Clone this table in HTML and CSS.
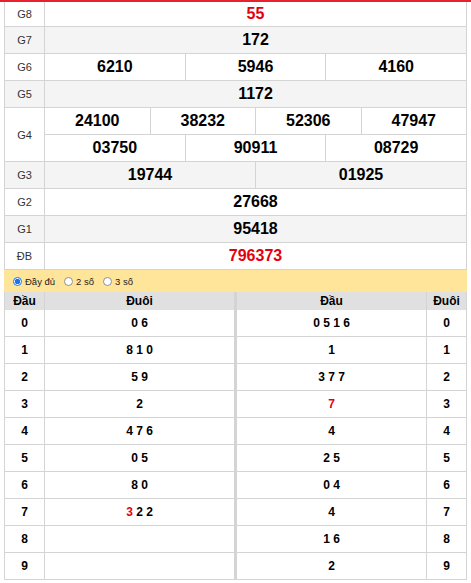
FILE: index.html
```html
<!DOCTYPE html>
<html lang="vi">
<head>
<meta charset="utf-8">
<title>Kết quả xổ số</title>
<link rel="stylesheet" href="styles.css">
</head>
<body>
<div class="topbar"></div>
<div class="page">
  <div class="results">
    <div class="row first"><div class="lbl">G8</div><div class="cells"><div class="cell red">55</div></div></div>
    <div class="row alt"><div class="lbl">G7</div><div class="cells"><div class="cell">172</div></div></div>
    <div class="row"><div class="lbl">G6</div><div class="cells"><div class="cell">6210</div><div class="cell">5946</div><div class="cell">4160</div></div></div>
    <div class="row alt"><div class="lbl">G5</div><div class="cells"><div class="cell">1172</div></div></div>
    <div class="row double"><div class="lbl">G4</div>
      <div class="stack">
        <div class="cells sub"><div class="cell">24100</div><div class="cell">38232</div><div class="cell">52306</div><div class="cell">47947</div></div>
        <div class="cells"><div class="cell">03750</div><div class="cell">90911</div><div class="cell">08729</div></div>
      </div>
    </div>
    <div class="row alt"><div class="lbl">G3</div><div class="cells"><div class="cell">19744</div><div class="cell">01925</div></div></div>
    <div class="row"><div class="lbl">G2</div><div class="cells"><div class="cell">27668</div></div></div>
    <div class="row alt"><div class="lbl">G1</div><div class="cells"><div class="cell">95418</div></div></div>
    <div class="row"><div class="lbl">ĐB</div><div class="cells"><div class="cell red">796373</div></div></div>
  </div>

  <div class="filter">
    <label class="opt"><input type="radio" name="mode" checked><span>Đầy đủ</span></label>
    <label class="opt"><input type="radio" name="mode"><span>2 số</span></label>
    <label class="opt"><input type="radio" name="mode"><span>3 số</span></label>
  </div>

  <div class="loto">
    <div class="h c1">Đầu</div><div class="h c2">Đuôi</div><div class="h c3">Đầu</div><div class="h c4">Đuôi</div>

    <div class="d c1">0</div><div class="d c2">0 6</div><div class="d c3">0 5 1 6</div><div class="d c4">0</div>
    <div class="d c1">1</div><div class="d c2">8 1 0</div><div class="d c3">1</div><div class="d c4">1</div>
    <div class="d c1">2</div><div class="d c2">5 9</div><div class="d c3">3 7 7</div><div class="d c4">2</div>
    <div class="d c1">3</div><div class="d c2">2</div><div class="d c3"><span class="red">7</span></div><div class="d c4">3</div>
    <div class="d c1">4</div><div class="d c2">4 7 6</div><div class="d c3">4</div><div class="d c4">4</div>
    <div class="d c1">5</div><div class="d c2">0 5</div><div class="d c3">2 5</div><div class="d c4">5</div>
    <div class="d c1">6</div><div class="d c2">8 0</div><div class="d c3">0 4</div><div class="d c4">6</div>
    <div class="d c1">7</div><div class="d c2"><span class="red">3</span> 2 2</div><div class="d c3">4</div><div class="d c4">7</div>
    <div class="d c1">8</div><div class="d c2"></div><div class="d c3">1 6</div><div class="d c4">8</div>
    <div class="d c1">9</div><div class="d c2"></div><div class="d c3">2</div><div class="d c4">9</div>
  </div>
</div>
</body>
</html>
```
FILE: styles.css
```css
* { box-sizing: border-box; }
html, body { margin: 0; padding: 0; background: #fff; }
body { font-family: "Liberation Sans", Arial, sans-serif; color: #000; }

.topbar { height: 2px; background: #e8212e; }
.page { padding: 0 4px; }

.results {
  border-left: 1px solid #d4d4d4;
  border-right: 1px solid #d4d4d4;
}
.row {
  display: flex;
  height: 27px;
  border-bottom: 1px solid #d4d4d4;
  background: #fff;
}
.row.first { height: 25px; }
.row.alt { background: #f4f4f4; }
.row.double { height: 54px; border-bottom: none; }
.lbl {
  width: 40px;
  flex: none;
  border-right: 1px solid #d4d4d4;
  display: flex;
  align-items: center;
  justify-content: center;
  font-size: 11px;
  color: #333;
}
.row.double .lbl { border-bottom: 1px solid #d4d4d4; }
.stack { flex: 1; display: flex; flex-direction: column; }
.stack .cells { height: 27px; flex: none; border-bottom: 1px solid #d4d4d4; }
.cells { flex: 1; display: flex; }
.cell {
  flex: 1 1 0;
  min-width: 0;
  display: flex;
  align-items: center;
  justify-content: center;
  font-size: 16px;
  font-weight: bold;
}
.cell + .cell { border-left: 1px solid #d4d4d4; }
.red { color: #e3000f; }

.filter {
  height: 22px;
  background: #ffe599;
  display: flex;
  align-items: center;
  padding-left: 9px;
  font-size: 9.5px;
  color: #222;
}
.opt { display: flex; align-items: center; margin-right: 9px; }
.opt input {
  -webkit-appearance: none;
  appearance: none;
  width: 9px;
  height: 9px;
  margin: 0 3px 0 0;
  border: 1px solid #8f8f8f;
  border-radius: 50%;
  background: #fff;
}
.opt input:checked {
  border: 1px solid #1a73e8;
  background: radial-gradient(circle, #1a73e8 0 2.5px, #fff 3px);
}

.loto {
  display: grid;
  grid-template-columns: 40px 192px 190px 40px;
  border-left: 1px solid #d4d4d4;
}
.loto > div {
  display: flex;
  align-items: center;
  justify-content: center;
  font-weight: bold;
  border-right: 1px solid #d4d4d4;
}
.loto > .c2 { border-right-width: 3px; }
.h {
  height: 18px;
  background: #e0e0e0;
  font-size: 12px;
}
.d {
  height: 27px;
  border-bottom: 1px solid #d4d4d4;
  font-size: 12px;
  white-space: pre;
}
```
